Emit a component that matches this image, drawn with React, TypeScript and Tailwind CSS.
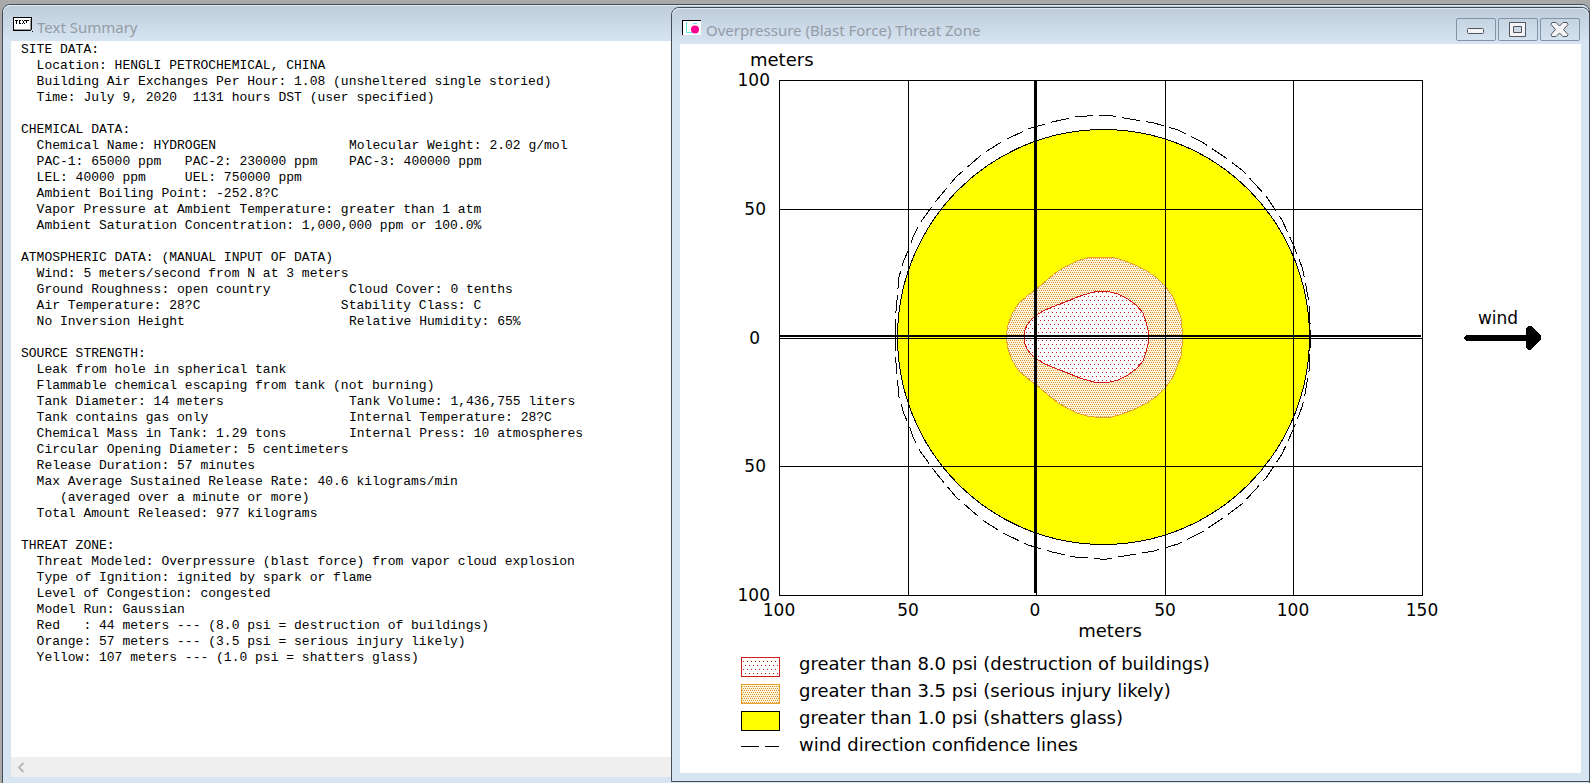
import React from "react";

type Pt = [number, number];

const CENTER_Y = 337;

/* Closed outline, symmetric about the downwind axis. Each point is [x, height above axis]. */
const outline = (pts: Pt[]) => {
  const top = pts.map(([x, h]) => `${x},${CENTER_Y - h}`);
  const bottom = [...pts].reverse().map(([x, h]) => `${x},${CENTER_Y + h}`);
  return `M${[...top, ...bottom].join(" L")} Z`;
};

const RED: Pt[] = [[1024, 0], [1025, 7], [1027, 12], [1031, 17], [1035, 21], [1043, 26], [1052, 30], [1060, 33], [1070, 37], [1080, 41], [1090, 44], [1098, 46], [1110, 45], [1118, 43], [1128, 38], [1137, 31], [1143, 24], [1146, 15], [1148, 7], [1149, 0]];
const ORANGE: Pt[] = [[1006, 0], [1008, 12], [1012, 23], [1018, 33], [1027, 41], [1035, 47], [1047, 57], [1058, 66], [1067, 71], [1077, 76], [1087, 79], [1095, 80], [1112, 80], [1122, 77], [1133, 73], [1147, 66], [1157, 59], [1166, 50], [1173, 40], [1177, 30], [1181, 19], [1183, 0]];
const DASHED: Pt[] = [[895, 0], [895, 14], [897, 37], [899, 60], [904, 77], [909, 88], [913, 100], [920, 114], [936, 136], [956, 160], [979, 180], [987, 186], [1003, 196], [1028, 208], [1052, 215], [1075, 220], [1100, 222], [1107, 222], [1130, 218], [1154, 214], [1178, 207], [1202, 195], [1226, 179], [1243, 166], [1266, 141], [1282, 117], [1293, 93], [1302, 70], [1305, 57], [1309, 34], [1310, 14], [1310, 0]];

const REPORT: { title: string; rows: (string | [string, string])[] }[] = [
  {
    title: "SITE DATA:",
    rows: [
      "  Location: HENGLI PETROCHEMICAL, CHINA",
      "  Building Air Exchanges Per Hour: 1.08 (unsheltered single storied)",
      "  Time: July 9, 2020  1131 hours DST (user specified)",
    ],
  },
  {
    title: "CHEMICAL DATA:",
    rows: [
      ["  Chemical Name: HYDROGEN", "Molecular Weight: 2.02 g/mol"],
      ["  PAC-1: 65000 ppm   PAC-2: 230000 ppm", "PAC-3: 400000 ppm"],
      "  LEL: 40000 ppm     UEL: 750000 ppm",
      "  Ambient Boiling Point: -252.8?C",
      "  Vapor Pressure at Ambient Temperature: greater than 1 atm",
      "  Ambient Saturation Concentration: 1,000,000 ppm or 100.0%",
    ],
  },
  {
    title: "ATMOSPHERIC DATA: (MANUAL INPUT OF DATA)",
    rows: [
      "  Wind: 5 meters/second from N at 3 meters",
      ["  Ground Roughness: open country", "Cloud Cover: 0 tenths"],
      "  Air Temperature: 28?C                  Stability Class: C",
      ["  No Inversion Height", "Relative Humidity: 65%"],
    ],
  },
  {
    title: "SOURCE STRENGTH:",
    rows: [
      "  Leak from hole in spherical tank",
      "  Flammable chemical escaping from tank (not burning)",
      ["  Tank Diameter: 14 meters", "Tank Volume: 1,436,755 liters"],
      ["  Tank contains gas only", "Internal Temperature: 28?C"],
      ["  Chemical Mass in Tank: 1.29 tons", "Internal Press: 10 atmospheres"],
      "  Circular Opening Diameter: 5 centimeters",
      "  Release Duration: 57 minutes",
      "  Max Average Sustained Release Rate: 40.6 kilograms/min",
      "     (averaged over a minute or more)",
      "  Total Amount Released: 977 kilograms",
    ],
  },
  {
    title: "THREAT ZONE:",
    rows: [
      "  Threat Modeled: Overpressure (blast force) from vapor cloud explosion",
      "  Type of Ignition: ignited by spark or flame",
      "  Level of Congestion: congested",
      "  Model Run: Gaussian",
      "  Red   : 44 meters --- (8.0 psi = destruction of buildings)",
      "  Orange: 57 meters --- (3.5 psi = serious injury likely)",
      "  Yellow: 107 meters --- (1.0 psi = shatters glass)",
    ],
  },
];

function Frame({ className, title, icon, controls, children }: { className: string; title: string; icon: React.ReactNode; controls?: React.ReactNode; children: React.ReactNode }) {
  return (
    <section aria-label={title} className={`absolute flex flex-col rounded-t-lg border border-[#444c55] bg-[#d7e4f2] ${className}`}>
      <header className="flex h-9 shrink-0 items-center gap-1 rounded-t-lg border-t border-[#e4ecf4] bg-linear-to-b from-[#bfcddb] to-[#d7e4f2] pr-[9px] pl-2.5">
        {icon}
        <h1 className="flex-1 pt-1.5 font-['Noto_Sans',sans-serif] text-[15px] leading-6 text-[#939ca5]">{title}</h1>
        {controls}
      </header>
      {children}
    </section>
  );
}

function TextIcon() {
  return (
    <svg className="mt-0.5" width="20" height="16" viewBox="0 0 20 16" shapeRendering="crispEdges" aria-hidden="true">
      <path d="M0 0h19v14H0z" fill="#fff" />
      <path d="M0 0h19v1H0zM0 0h1v14H0zM1 13h17v1H1zM18 1h1v12h-1zM19 14h1v1h-1z" fill="#000" />
      <path d="M1 12h17v1H1zM17 2h1v11h-1z" fill="#999" />
      <path d="M2 3h3v1H2zM3 4h1v3H3zM6 3h2v1H6zM6 4h1v3H6zM7 6h1v1H7zM9 3h1v1H9zM10 4h1v2h-1zM11 3h1v1h-1zM9 6h1v1H9zM11 6h1v1h-1zM12 3h4v1h-4zM13 4h1v2h-1z" fill="#000" />
    </svg>
  );
}

function ZoneIcon() {
  return (
    <svg className="mt-0.5" width="20" height="16" viewBox="0 0 20 16" aria-hidden="true">
      <path d="M0 0h19v15H0z" fill="#fff" />
      <path d="M0 .5h19M.5 0v15" stroke="#000" fill="none" />
      <path d="M4.500 2v10.500h6M11 3.500h4" stroke="#5fe3e3" fill="none" />
      <circle cx="13" cy="9.500" r="4" fill="#ff0090" />
    </svg>
  );
}

const CONTROLS: { label: string; glyph: React.ReactNode }[] = [
  { label: "Minimize", glyph: <rect x="11.500" y="10.500" width="16" height="5" rx="1" /> },
  { label: "Maximize", glyph: <path fillRule="evenodd" d="M11.500 4.500h16v14h-16zM15.500 8.500v6h8v-6z" /> },
  { label: "Close", glyph: <path d="M12 4.500h4l3.500 3.500 3.500-3.500h4l1 2-4.500 5 4.500 5-1 2h-4l-3.500-3.500-3.500 3.500h-4l-1-2 4.500-5-4.500-5z" /> },
];

function WindowControls() {
  return (
    <div className="flex gap-0.5 pt-1.5">
      {CONTROLS.map(({ label, glyph }) => (
        <button key={label} type="button" aria-label={label} className="h-[23px] w-10 rounded-xs border border-[#8493a8]">
          <svg className="block" width="38" height="21" viewBox="1 1 38 21" fill="#f4f4f6" stroke="#50555f">{glyph}</svg>
        </button>
      ))}
    </div>
  );
}

function Report() {
  return (
    <div className="flex flex-1 flex-col gap-4 overflow-hidden bg-white pt-px pl-2.5 font-['Liberation_Mono',monospace] text-[13px] leading-4 whitespace-pre text-black">
      {REPORT.map(({ title, rows }) => (
        <section key={title}>
          <h2>{title}</h2>
          {rows.map((row) =>
            typeof row === "string" ? (
              <p key={row}>{row}</p>
            ) : (
              <p key={row[0]} className="flex">
                <span className="w-82 shrink-0">{row[0]}</span>
                <span>{row[1]}</span>
              </p>
            ),
          )}
        </section>
      ))}
    </div>
  );
}

function Patterns() {
  return (
    <defs>
      <pattern id="red-dots" width="4" height="8" patternUnits="userSpaceOnUse">
        <rect width="4" height="8" fill="#fff" />
        <path d="M0 0h1v1H0zM2 4h1v1H2z" fill="#c0181c" />
      </pattern>
      <pattern id="orange-dots" width="2" height="4" patternUnits="userSpaceOnUse">
        <rect width="2" height="4" fill="#fff4dc" />
        <path d="M0 0h1v1H0zM1 2h1v1H1z" fill="#dc9430" />
      </pattern>
    </defs>
  );
}

function ThreatChart() {
  return (
    <svg className="block max-w-full" width="872" height="600" viewBox="680 44 872 600" role="img" aria-label="Threat zone plot" fontFamily="'DejaVu Sans', sans-serif" fontSize="17">
      <Patterns />
      <g shapeRendering="crispEdges">
        <ellipse cx="1103.500" cy="337" rx="206" ry="207.500" fill="#ff0" stroke="#000" />
        <path d={outline(ORANGE)} fill="url(#orange-dots)" stroke="#e8a030" />
        <path d={outline(RED)} fill="url(#red-dots)" stroke="#d01818" />
        <path d={outline(DASHED)} fill="none" stroke="#000" strokeDasharray="18 6" />
        <path d="M779.500 80.500h643v515h-643zM908.500 80v515M1036.500 80v515M1165.500 80v515M1293.500 80v515M779 209.500h643M779 338.500h643M779 466.500h643" fill="none" stroke="#000" />
        <path d="M1034 80h3v513h-3zM779 335h642v2H779z" fill="#000" />
        <path d="M1466 335h60v-7l2-2h3l10 10v3l-10 11h-3l-2-2v-7h-60l-2-2v-2z" fill="#000" />
      </g>
      <g fontSize="18">
        <text x="750" y="66">meters</text>
        <text x="1110" y="637" textAnchor="middle">meters</text>
      </g>
      <g textAnchor="end">
        <text x="770" y="86">100</text>
        <text x="766" y="215">50</text>
        <text x="760" y="344">0</text>
        <text x="766" y="472">50</text>
        <text x="770" y="601">100</text>
      </g>
      <g textAnchor="middle">
        <text x="779" y="616">100</text>
        <text x="908" y="616">50</text>
        <text x="1035" y="616">0</text>
        <text x="1165" y="616">50</text>
        <text x="1293" y="616">100</text>
        <text x="1422" y="616">150</text>
        <text x="1498" y="324">wind</text>
      </g>
    </svg>
  );
}

const LEGEND = [
  { label: "greater than 8.0 psi (destruction of buildings)", fill: "url(#red-dots)", stroke: "#c81e1e" },
  { label: "greater than 3.5 psi (serious injury likely)", fill: "url(#orange-dots)", stroke: "#e8a030" },
  { label: "greater than 1.0 psi (shatters glass)", fill: "#ff0", stroke: "#000" },
  { label: "wind direction confidence lines", fill: "", stroke: "#000" },
];

function Legend() {
  return (
    <ul className="flex flex-col pt-1.5 pl-[61px] font-['DejaVu_Sans',sans-serif] text-[18px] leading-[27px] whitespace-nowrap text-black">
      {LEGEND.map(({ label, fill, stroke }) => (
        <li key={label} className="flex items-center gap-[19px]">
          <svg className="mt-1.5" width="39" height="20" shapeRendering="crispEdges" aria-hidden="true">
            {fill ? <rect x="0.500" y="0.500" width="38" height="19" fill={fill} stroke={stroke} /> : <path d="M0 8.500h38" stroke={stroke} strokeDasharray="18 6" />}
          </svg>
          {label}
        </li>
      ))}
    </ul>
  );
}

export default function App() {
  return (
    <main className="relative h-screen overflow-hidden bg-[#a9a9a9]">
      <Frame className="top-1 -bottom-1 left-0.5 right-0" title="Text Summary" icon={<TextIcon />}>
        <div className="flex min-h-0 flex-1 flex-col px-2 pb-[9px]">
          <Report />
          <div className="flex h-5 shrink-0 items-center bg-[#efefef] pl-1.5">
            <button type="button" aria-label="Scroll left">
              <svg className="block" width="8" height="11" viewBox="0 0 8 11" fill="none" stroke="#b8b8b8" strokeWidth="2"><path d="M6.500 1l-4.500 4.500 4.500 4.500" /></svg>
            </button>
          </div>
        </div>
      </Frame>
      <Frame className="top-[7px] right-0 bottom-px left-[42.2%]" title="Overpressure (Blast Force) Threat Zone" icon={<ZoneIcon />} controls={<WindowControls />}>
        <div className="flex min-h-0 flex-1 flex-col px-2 pb-2">
          <div className="flex-1 overflow-hidden bg-white">
            <ThreatChart />
            <Legend />
          </div>
        </div>
      </Frame>
    </main>
  );
}
